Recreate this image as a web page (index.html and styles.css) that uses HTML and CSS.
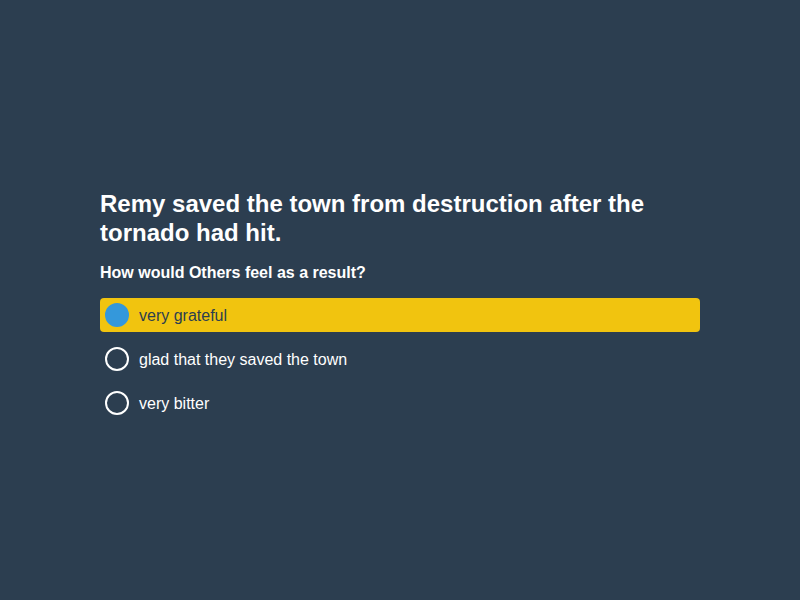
FILE: index.html
```html
<!DOCTYPE html>
<html>
<head>
<meta charset="utf-8">
<link rel="stylesheet" href="styles.css">
</head>
<body>
<main class="page">
  <section class="quiz">
    <h1 class="question">Remy saved the town from destruction after the tornado had hit.</h1>
    <h2 class="prompt">How would Others feel as a result?</h2>
    <ul class="options">
      <li class="option selected"><span class="radio"></span><span class="label">very grateful</span></li>
      <li class="option"><span class="radio"></span><span class="label">glad that they saved the town</span></li>
      <li class="option"><span class="radio"></span><span class="label">very bitter</span></li>
    </ul>
  </section>
</main>
</body>
</html>
```

FILE: styles.css
```css
html, body {
  margin: 0;
  padding: 0;
}
body {
  background: #2c3e50;
  font-family: "Liberation Sans", Arial, sans-serif;
  color: #ffffff;
}
.page {
  height: 600px;
  display: flex;
  align-items: center;
  justify-content: center;
}
.quiz {
  width: 600px;
  margin-top: 9px;
}
.question {
  margin: 0;
  font-size: 24px;
  line-height: 29px;
  font-weight: bold;
}
.prompt {
  margin: 17px 0 17px;
  font-size: 16px;
  line-height: 17px;
  font-weight: bold;
}
.options {
  list-style: none;
  margin: 0;
  padding: 0;
  display: flex;
  flex-direction: column;
  gap: 10px;
}
.option {
  height: 34px;
  display: flex;
  align-items: center;
  padding: 0 5px;
  border-radius: 4px;
  font-size: 16px;
}
.label {
  padding-top: 2px;
}
.option.selected {
  background: #f1c40f;
  color: #2c3e50;
}
.radio {
  width: 20px;
  height: 20px;
  border: 2px solid #ffffff;
  border-radius: 50%;
  margin-right: 10px;
  flex: none;
}
.option.selected .radio {
  background: #3498db;
  border-color: #3498db;
}
```
